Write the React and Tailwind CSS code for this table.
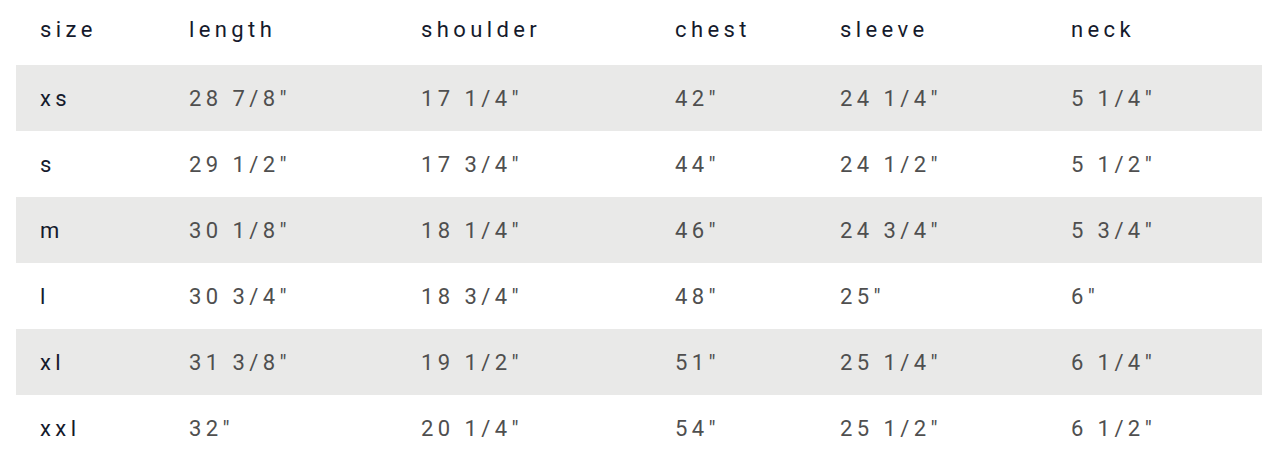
const columns = ['size', 'length', 'shoulder', 'chest', 'sleeve', 'neck']

const rows = [
  ['xs', '28 7/8"', '17 1/4"', '42"', '24 1/4"', '5 1/4"'],
  ['s', '29 1/2"', '17 3/4"', '44"', '24 1/2"', '5 1/2"'],
  ['m', '30 1/8"', '18 1/4"', '46"', '24 3/4"', '5 3/4"'],
  ['l', '30 3/4"', '18 3/4"', '48"', '25"', '6"'],
  ['xl', '31 3/8"', '19 1/2"', '51"', '25 1/4"', '6 1/4"'],
  ['xxl', '32"', '20 1/4"', '54"', '25 1/2"', '6 1/2"'],
]

// column widths taken from the size chart
const widths = ['w-[149px]', 'w-[232px]', 'w-[254px]', 'w-[165px]', 'w-[231px]', 'w-[215px]']

export default function App() {
  return (
    <div className="bg-white px-4 pb-[14px] font-['Roboto',sans-serif] text-[22px] tracking-[0.2em]">
      <table className="w-[1246px] border-collapse table-fixed">
        <thead>
          <tr className="h-[65px]">
            {columns.map((c, i) => (
              <th key={c} className={`${widths[i]} pl-6 pb-[7px] text-left font-normal text-[#151a2c]`}>
                {c}
              </th>
            ))}
          </tr>
        </thead>
        <tbody>
          {rows.map((r, ri) => (
            <tr key={r[0]} className={ri % 2 === 0 ? 'h-[66px] bg-[#e9e9e8]' : 'h-[66px] bg-white'}>
              {r.map((v, i) => (
                <td key={i} className={i === 0 ? 'pl-6 text-[#151a2c]' : 'pl-6 text-[#4f4f4f]'}>
                  {v}
                </td>
              ))}
            </tr>
          ))}
        </tbody>
      </table>
    </div>
  )
}
